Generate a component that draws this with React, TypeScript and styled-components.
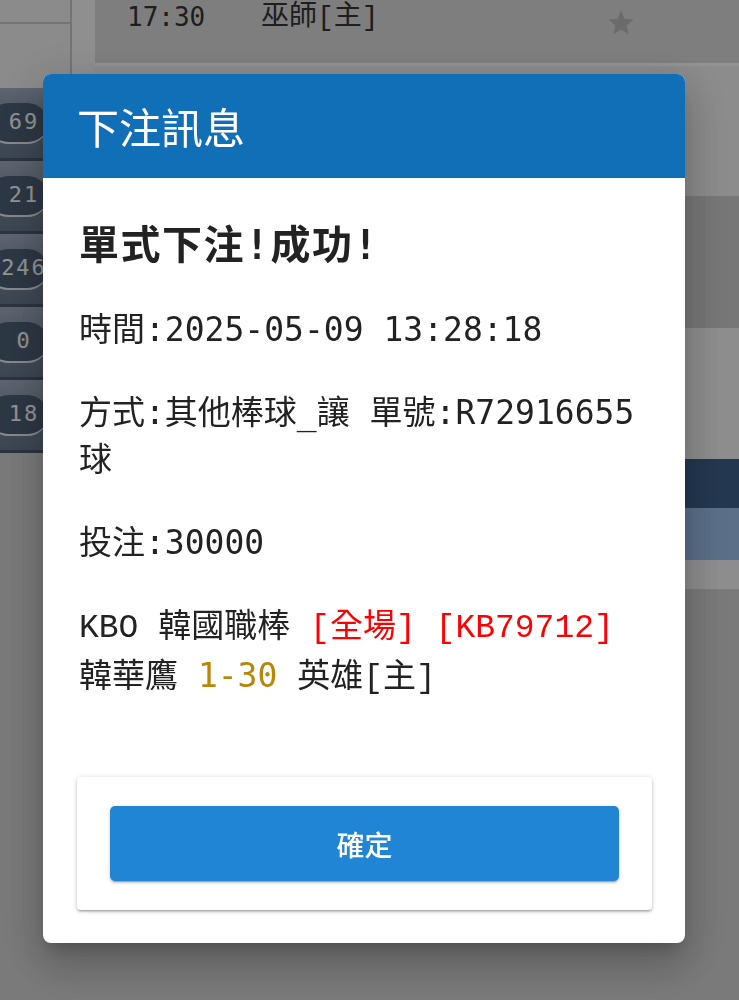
import React from "react";
import styled, { createGlobalStyle } from "styled-components";

const GlobalStyle = createGlobalStyle`
  html, body {
    margin: 0;
    padding: 0;
  }
  body {
    font-family: "Noto Sans CJK TC", "Noto Sans", sans-serif;
    background: #cbcbcb;
    overflow: hidden;
  }
`;

const MONO = `"DejaVu Sans Mono", "Noto Sans CJK TC", monospace`;
const COURIER = `"Liberation Mono", "Noto Sans CJK TC", monospace`;

/* ---------- page behind the dialog ---------- */

const Page = styled.div`
  display: flex;
  width: 739px;
  height: 1000px;
`;

const Sidebar = styled.aside`
  width: 95px;
  flex: none;
  display: flex;
  flex-direction: column;
  background: #cbcbcb;
`;

const SideTop = styled.div`
  height: 88px;
  display: flex;
`;

const SideCell = styled.div`
  width: 70px;
  border-right: 2px solid #c2c2c2;
  background: #e8e8e8;
`;

const SideCellHead = styled.div`
  height: 22px;
  border-bottom: 2px solid #c2c2c2;
`;

const SideStrip = styled.div`
  flex: 1;
  background: #efefef;
`;

const PillBand = styled.div`
  height: 70px;
  border-bottom: 3px solid #4a5766;
  background: linear-gradient(#9aa8bb, #6e7e92 70%, #64758a);
  display: flex;
  align-items: center;
`;

const CountPill = styled.span`
  box-sizing: border-box;
  margin-left: -12px;
  width: 60px;
  height: 41px;
  padding-left: 12px;
  border-radius: 21px;
  background: #4b5d73;
  border-bottom: 2px solid #dfe6ef;
  color: #f4f6f8;
  font: 22px/1 ${MONO};
  letter-spacing: 2px;
  display: flex;
  align-items: center;
  justify-content: center;
`;

const Main = styled.main`
  flex: 1;
  display: flex;
  flex-direction: column;
`;

const MatchRow = styled.div`
  height: 63px;
  flex: none;
  background: #d3d3d3;
  border-bottom: 3px solid #f6f6f6;
  display: flex;
  align-items: flex-start;
  padding-left: 32px;
`;

const MatchTime = styled.span`
  width: 134px;
  flex: none;
  font: 26px/34px ${MONO};
  color: #333;
`;

const MatchTeam = styled.span`
  flex: 1;
  font: 28px/36px ${COURIER};
  color: #333;
`;

const StarIcon = styled.svg`
  width: 30px;
  height: 30px;
  margin: 8px 103px 0 0;
  fill: #b2b2b2;
`;

const Section = styled.div<{ $h?: number; $bg: string }>`
  height: ${(p) => (p.$h ? `${p.$h}px` : "auto")};
  flex: ${(p) => (p.$h ? "none" : "1")};
  background: ${(p) => p.$bg};
`;

/* ---------- dialog ---------- */

const Overlay = styled.div`
  position: fixed;
  inset: 0;
  background: rgba(0, 0, 0, 0.4);
  display: flex;
  align-items: flex-start;
  padding: 74px 0 0 43px;
  box-sizing: border-box;
`;

const Dialog = styled.div`
  width: 642px;
  background: #ffffff;
  border-radius: 8px;
  overflow: hidden;
  display: flex;
  flex-direction: column;
  box-shadow: 0 11px 15px -7px rgba(0, 0, 0, 0.2),
    0 24px 38px 3px rgba(0, 0, 0, 0.14), 0 9px 46px 8px rgba(0, 0, 0, 0.12);
`;

const DialogHeader = styled.header`
  height: 104px;
  background: #106fb7;
  display: flex;
  align-items: center;
  padding: 0 34px;
  color: #ffffff;
  font: 400 42px/1 "Noto Sans CJK TC", sans-serif;
`;

const DialogBody = styled.div`
  padding: 42px 36px 0;
  font-family: ${MONO};
  font-size: 33px;
  line-height: 47px;
  color: #222;
`;

const Headline = styled.h2`
  margin: 0;
  font: 700 40px/50px ${MONO};
  letter-spacing: 1.5px;
  color: #222;
`;

const Info = styled.p`
  margin: 36px 0 0;
`;

const Tag = styled.span<{ $tone?: "red" | "gold"; $serif?: boolean }>`
  color: ${(p) =>
    p.$tone === "red" ? "#ff0000" : p.$tone === "gold" ? "#b8860b" : "inherit"};
  font-family: ${(p) => (p.$serif ? COURIER : MONO)};
`;

const ActionCard = styled.div`
  margin: 75px 33px 33px 34px;
  padding: 29px 33px;
  background: #ffffff;
  border-radius: 4px;
  box-shadow: 0 1px 5px rgba(0, 0, 0, 0.2), 0 2px 2px rgba(0, 0, 0, 0.14),
    0 3px 1px -2px rgba(0, 0, 0, 0.12);
`;

const ConfirmButton = styled.button`
  display: block;
  width: 100%;
  height: 75px;
  border: none;
  border-radius: 5px;
  background: #2185d5;
  color: #ffffff;
  font: 500 28px/1 "Noto Sans CJK TC", sans-serif;
  box-shadow: 0 3px 1px -2px rgba(0, 0, 0, 0.2), 0 2px 2px rgba(0, 0, 0, 0.14),
    0 1px 5px rgba(0, 0, 0, 0.12);
  cursor: pointer;
`;

const counts = ["69", "21", "246", "0", "18"];

export default function App() {
  return (
    <>
      <GlobalStyle />
      <Page>
        <Sidebar>
          <SideTop>
            <SideCell>
              <SideCellHead />
            </SideCell>
            <SideStrip />
          </SideTop>
          {counts.map((c) => (
            <PillBand key={c}>
              <CountPill>{c}</CountPill>
            </PillBand>
          ))}
        </Sidebar>
        <Main>
          <MatchRow>
            <MatchTime>17:30</MatchTime>
            <MatchTeam>巫師[主]</MatchTeam>
            <StarIcon viewBox="0 0 24 24">
              <path d="M12 17.27L18.18 21l-1.64-7.03L22 9.24l-7.19-.61L12 2 9.19 8.63 2 9.24l5.46 4.73L5.82 21z" />
            </StarIcon>
          </MatchRow>
          <Section $h={130} $bg="#e9e9e9" />
          <Section $h={132} $bg="#c7c7c7" />
          <Section $h={131} $bg="#ececec" />
          <Section $h={49} $bg="#3c5d85" />
          <Section $h={52} $bg="#98b9e3" />
          <Section $h={29} $bg="#ececec" />
          <Section $bg="#cbcbcb" />
        </Main>
      </Page>

      <Overlay>
        <Dialog role="dialog" aria-label="下注訊息">
          <DialogHeader>下注訊息</DialogHeader>
          <DialogBody>
            <Headline>單式下注!成功!</Headline>
            <Info>時間:2025-05-09 13:28:18</Info>
            <Info>
              方式:其他棒球_讓 單號:R72916655
              <br />球
            </Info>
            <Info>投注:30000</Info>
            <Info>
              <Tag $serif>KBO 韓國職棒</Tag> <Tag $serif $tone="red">[全場]</Tag>{" "}
              <Tag $serif $tone="red">[KB79712]</Tag>
              <br />
              韓華鷹 <Tag $tone="gold">1-30</Tag> 英雄<Tag $serif>[主]</Tag>
            </Info>
          </DialogBody>
          <ActionCard>
            <ConfirmButton type="button">確定</ConfirmButton>
          </ActionCard>
        </Dialog>
      </Overlay>
    </>
  );
}
